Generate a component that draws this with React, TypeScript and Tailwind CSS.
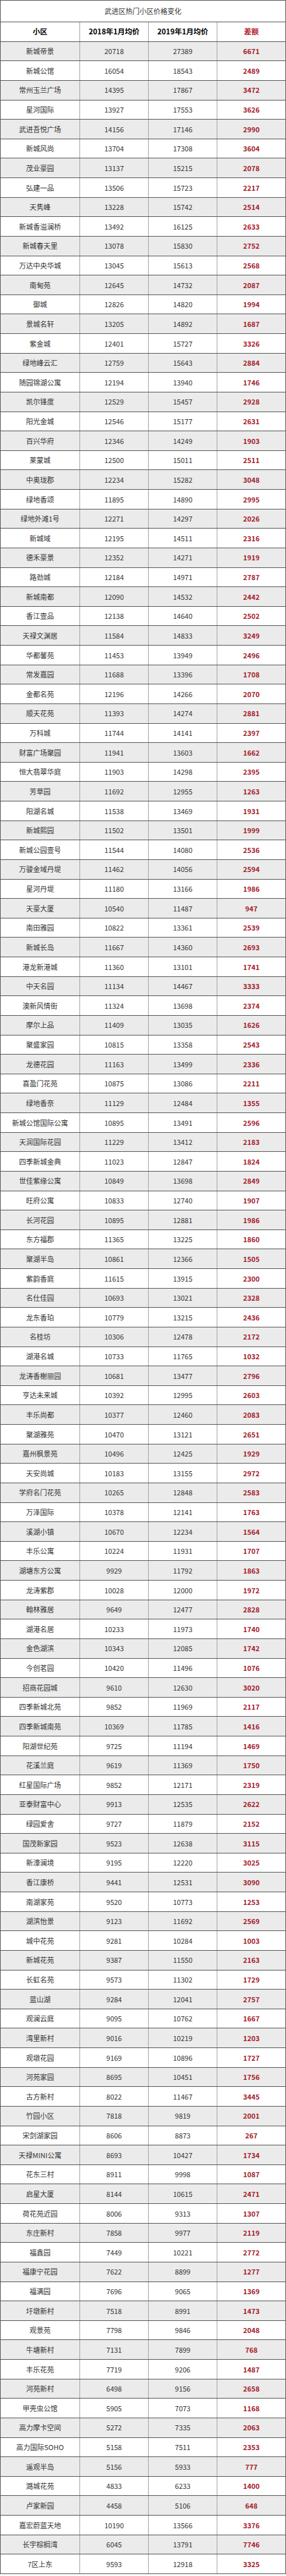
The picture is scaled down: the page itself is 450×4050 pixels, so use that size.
import React from 'react';

const raw = `新城帝景,20718,27389,6671
新城公馆,16054,18543,2489
常州玉兰广场,14395,17867,3472
星河国际,13927,17553,3626
武进吾悦广场,14156,17146,2990
新城风尚,13704,17308,3604
茂业豪园,13137,15215,2078
弘建一品,13506,15723,2217
天隽峰,13228,15742,2514
新城香溢澜桥,13492,16125,2633
新城春天里,13078,15830,2752
万达中央华城,13045,15613,2568
南甸苑,12645,14732,2087
御城,12826,14820,1994
景城名轩,13205,14892,1687
紫金城,12401,15727,3326
绿地峰云汇,12759,15643,2884
随园锦湖公寓,12194,13940,1746
凯尔锋度,12529,15457,2928
阳光金城,12546,15177,2631
百兴华府,12346,14249,1903
莱蒙城,12500,15011,2511
中奥珑郡,12234,15282,3048
绿地香颂,11895,14890,2995
绿地外滩1号,12271,14297,2026
新城域,12195,14511,2316
德禾豪景,12352,14271,1919
路劲城,12184,14971,2787
新城南都,12090,14532,2442
香江壹品,12138,14640,2502
天禄文渊居,11584,14833,3249
华都馨苑,11453,13949,2496
常发嘉园,11688,13396,1708
金都名苑,12196,14266,2070
顺天花苑,11393,14274,2881
万科城,11744,14141,2397
财富广场聚园,11941,13603,1662
恒大翡翠华庭,11903,14298,2395
芳草园,11692,12955,1263
阳湖名城,11538,13469,1931
新城熙园,11502,13501,1999
新城公园壹号,11544,14080,2536
万骏金域丹堤,11462,14056,2594
星河丹堤,11180,13166,1986
天豪大厦,10540,11487,947
南田雅园,10822,13361,2539
新城长岛,11667,14360,2693
港龙新港城,11360,13101,1741
中天名园,11134,14467,3333
澳新风情街,11324,13698,2374
摩尔上品,11409,13035,1626
聚盛家园,10815,13358,2543
龙德花园,11163,13499,2336
喜盈门花苑,10875,13086,2211
绿地香奈,11129,12484,1355
新城公馆国际公寓,10895,13491,2596
天润国际花园,11229,13412,2183
四季新城金典,11023,12847,1824
世佳紫缘公寓,10849,13698,2849
旺府公寓,10833,12740,1907
长河花园,10895,12881,1986
东方福郡,11365,13225,1860
聚湖半岛,10861,12366,1505
紫韵香庭,11615,13915,2300
名仕佳园,10693,13021,2328
龙东香珀,10779,13215,2436
名桂坊,10306,12478,2172
湖港名城,10733,11765,1032
龙涛香榭丽园,10681,13477,2796
亨达未来城,10392,12995,2603
丰乐尚都,10377,12460,2083
聚湖雅苑,10470,13121,2651
嘉州枫景苑,10496,12425,1929
天安尚城,10183,13155,2972
学府名门花苑,10265,12848,2583
万泽国际,10378,12141,1763
溪湖小镇,10670,12234,1564
丰乐公寓,10224,11931,1707
湖塘东方公寓,9929,11792,1863
龙涛紫郡,10028,12000,1972
翰林雅居,9649,12477,2828
湖港名居,10233,11973,1740
金色湖滨,10343,12085,1742
今创茗园,10420,11496,1076
招商花园城,9610,12630,3020
四季新城北苑,9852,11969,2117
四季新城南苑,10369,11785,1416
阳湖世纪苑,9725,11194,1469
花溪兰庭,9619,11369,1750
红星国际广场,9852,12171,2319
亚泰财富中心,9913,12535,2622
绿园爱舍,9727,11879,2152
国茂新家园,9523,12638,3115
新濠澜境,9195,12220,3025
香江康桥,9441,12531,3090
南湖家苑,9520,10773,1253
湖滨怡景,9123,11692,2569
城中花苑,9281,10284,1003
新城花苑,9387,11550,2163
长虹名苑,9573,11302,1729
蓝山湖,9284,12041,2757
观澜云庭,9095,10762,1667
湾里新村,9016,10219,1203
观墩花园,9169,10896,1727
河苑家园,8695,10451,1756
古方新村,8022,11467,3445
竹园小区,7818,9819,2001
宋剑湖家园,8606,8873,267
天禄MINI公寓,8693,10427,1734
花东三村,8911,9998,1087
启星大厦,8144,10615,2471
荷花苑近园,8006,9313,1307
东庄新村,7858,9977,2119
福鑫园,7449,10221,2772
福康宁花园,7622,8899,1277
福满园,7696,9065,1369
圩墩新村,7518,8991,1473
观景苑,7798,9846,2048
牛塘新村,7131,7899,768
丰乐花苑,7719,9206,1487
河苑新村,6498,9156,2658
甲壳虫公馆,5905,7073,1168
高力摩卡空间,5272,7335,2063
高力国际SOHO,5158,7511,2353
遥观半岛,5156,5933,777
潞城花苑,4833,6233,1400
卢家新园,4458,5106,648
嘉宏蔚蓝天地,10190,13566,3376
长宇棕榈湾,6045,13791,7746
7区上东,9593,12918,3325`;

const rows = raw.split('\n').map((line) => line.split(','));

const cell = 'flex items-center justify-center border-r border-[#a3a3a3] last:border-r-0';

export default function App() {
  return (
    <div className="w-[450px] bg-white text-[11px] text-[#333] font-['Noto_Sans_CJK_SC','Noto_Sans',sans-serif]">
      <div className="border border-[#555] border-b-0">
        <div className="h-[34px] flex items-center justify-center border-b border-[#555] text-[11px] text-[#333]">
          武进区热门小区价格变化
        </div>

        {/* header */}
        <div className="grid grid-cols-[125px_108px_108px_1fr] h-[30.64px] border-b border-[#555] font-bold text-[11.5px] text-black">
          <div className={cell}>小区</div>
          <div className={cell}>2018年1月均价</div>
          <div className={cell}>2019年1月均价</div>
          <div className={cell + ' text-[#b1202b]'}>差额</div>
        </div>

        {rows.map(([name, a, b, d], i) => (
          <div
            key={name}
            className={
              'grid grid-cols-[125px_108px_108px_1fr] h-[30.64px] border-b border-[#555] ' +
              (i % 2 === 0 ? 'bg-[#ebebeb]' : 'bg-white')
            }
          >
            <div className={cell}>{name}</div>
            <div className={cell}>{a}</div>
            <div className={cell}>{b}</div>
            <div className={cell + ' font-bold text-[#a51d2a]'}>{d}</div>
          </div>
        ))}
      </div>
    </div>
  );
}
